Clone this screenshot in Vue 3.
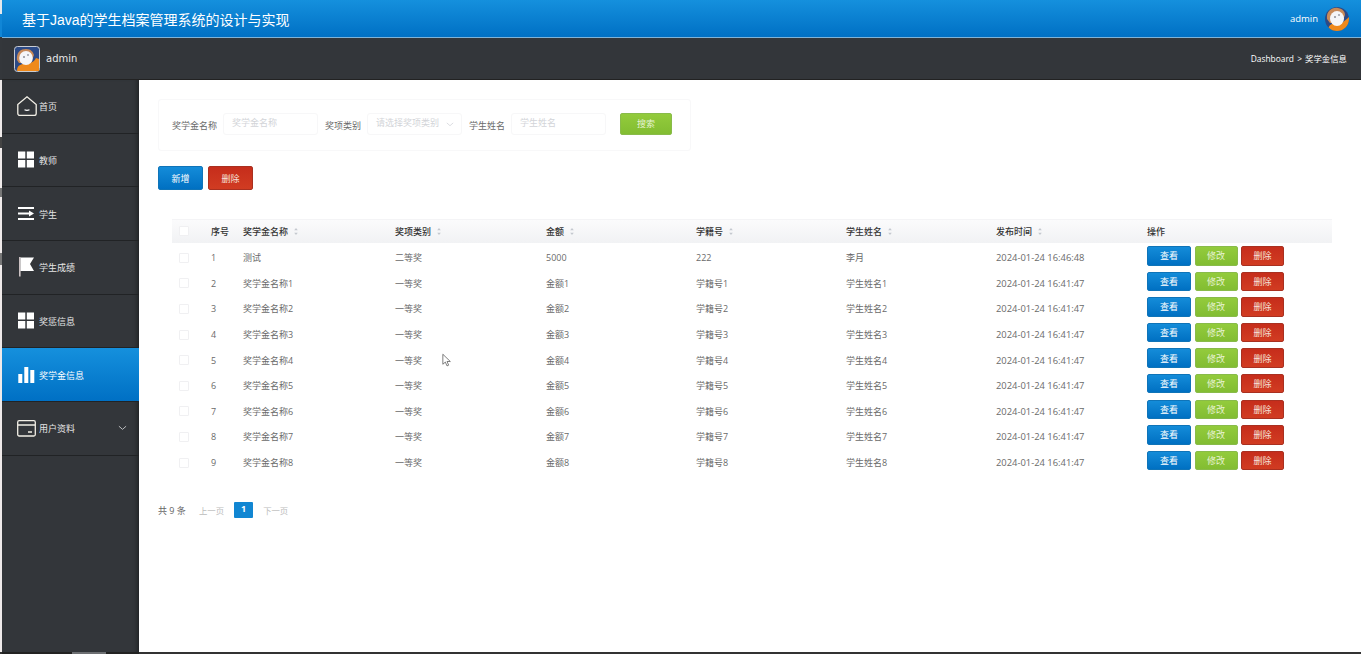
<template>
  <div class="page">
    <div class="strip"></div>
    <div class="shell">
      <header class="topbar">
        <div class="title">基于Java的学生档案管理系统的设计与实现</div>
        <div class="top-user">
          <span>admin</span>
          <svg class="avatar-round" viewBox="0 0 24 24">
            <defs><clipPath id="rc"><circle cx="12" cy="12" r="12" /></clipPath></defs>
            <g clip-path="url(#rc)">
              <rect width="24" height="24" fill="#2c4a86" />
              <path d="M2 12C1 4 7 0 13 1c5 1 7 4 7 7l-3 8H5z" fill="#c98a58" />
              <path d="M3 24c0-6 4-8 9-8 5 1 9-3 12-6v14z" fill="#ef8a1c" />
              <ellipse cx="12" cy="11.5" rx="7" ry="7.5" fill="#f5f6f8" />
              <circle cx="10" cy="10" r=".8" fill="#445" />
              <circle cx="14" cy="8" r=".7" fill="#445" />
            </g>
          </svg>
        </div>
      </header>
      <div class="subbar">
        <div class="sub-user">
          <svg class="avatar-square" viewBox="0 0 26 26">
            <rect x=".5" y=".5" width="25" height="25" rx="3" fill="#2c4a86" stroke="#c9ccd2" />
            <path d="M3 14C2 6 7 3 12 3c5 0 7 3 8 6l-3 8H5z" fill="#c98a58" />
            <path d="M3 25c0-5 3-7 7-7 6 0 10-2 12-6l3 1v12z" fill="#ef8a1c" />
            <ellipse cx="12" cy="12" rx="6.8" ry="7" fill="#f5f6f8" />
            <circle cx="10" cy="11" r=".8" fill="#445" />
            <circle cx="14" cy="9" r=".7" fill="#445" />
          </svg>
          <span>admin</span>
        </div>
        <div class="crumb">Dashboard &gt; 奖学金信息</div>
      </div>
      <div class="body">
        <aside class="sidebar">
          <div v-for="item in menu" :key="item.label" class="menu-item" :class="{ active: item.active }">
            <svg class="menu-icon" viewBox="0 0 20 20" v-html="item.icon"></svg>
            <span class="menu-label">{{ item.label }}</span>
            <svg v-if="item.arrow" class="menu-arrow" viewBox="0 0 10 6">
              <path d="M1 1l4 3.5L9 1" fill="none" stroke="#c8cacc" stroke-width="1" />
            </svg>
          </div>
        </aside>
        <main class="main">
          <div class="search-card">
            <label class="field-label">奖学金名称</label>
            <div class="input">奖学金名称</div>
            <label class="field-label">奖项类别</label>
            <div class="input select">
              请选择奖项类别
              <svg viewBox="0 0 10 6"><path d="M1 1l4 3.5L9 1" fill="none" stroke="#d4d6da" stroke-width="1" /></svg>
            </div>
            <label class="field-label">学生姓名</label>
            <div class="input">学生姓名</div>
            <button class="btn green search-btn">搜索</button>
          </div>
          <div class="actions">
            <button class="btn blue big">新增</button>
            <button class="btn red big">删除</button>
          </div>
          <div class="table-card">
            <div class="row head">
              <div><span class="check head-check"></span></div>
              <div>序号</div>
              <div v-for="h in sortable" :key="h">
                {{ h }}
                <svg class="sort" viewBox="0 0 6 10">
                  <path d="M3 1l2 2.6H1zM3 9L1 6.4h4z" fill="#c4c8cf" />
                </svg>
              </div>
              <div>操作</div>
            </div>
            <div v-for="r in rows" :key="r.id" class="row">
              <div><span class="check"></span></div>
              <div>{{ r.id }}</div>
              <div>{{ r.name }}</div>
              <div>{{ r.level }}</div>
              <div>{{ r.amount }}</div>
              <div>{{ r.no }}</div>
              <div>{{ r.student }}</div>
              <div class="time">{{ r.time }}</div>
              <div class="ops">
                <button class="btn blue small view">查看</button>
                <button class="btn green small">修改</button>
                <button class="btn red small">删除</button>
              </div>
            </div>
          </div>
          <div class="pager">
            <span class="total">共 9 条</span>
            <span class="page-link">上一页</span>
            <span class="page-cur">1</span>
            <span class="page-link">下一页</span>
          </div>
          <svg class="cursor" viewBox="0 0 12 17">
            <path d="M1 1v12l3-2.6 2 4.6 2-.9-2-4.400h4z" fill="#fff" stroke="#555" stroke-width=".9" />
          </svg>
        </main>
      </div>
    </div>
  </div>
</template>

<script setup>
const grid = '<path d="M1 1.500h7.300v7H1zM9.800 1.500H17v7H9.800zM1 10h7.300v7.500H1zM9.800 10H17v7.500H9.800z" fill="#fff"/>'

const menu = [
  {
    label: '首页',
    icon: '<path d="M.8 8.500L10 .8l9.200 7.700v9a2 2 0 0 1-2 2H2.800a2 2 0 0 1-2-2z" fill="none" stroke="#f2efe6" stroke-width="1.300"/><path d="M7.500 13.800q2.500 1 5 0" fill="none" stroke="#fff" stroke-width="1.200"/>'
  },
  { label: '教师', icon: grid },
  {
    label: '学生',
    icon: '<path d="M1 3h16v2H1zM1 8.500h11V6.500l5 3-5 3v-2H1zM1 14h16v2H1z" fill="#fff"/>'
  },
  {
    label: '学生成绩',
    icon: '<path d="M2.200 0h1.300v19.500H2.200z" fill="#f3e6e6"/><path d="M3.500 .5H17l-4 6.500 4 7H3.500z" fill="#fff"/>'
  },
  { label: '奖惩信息', icon: grid },
  {
    label: '奖学金信息',
    active: true,
    icon: '<path d="M1.300 9h4v9h-4zM7.300 2h4v16h-4zM13.300 5h4v13h-4z" fill="#fff"/>'
  },
  {
    label: '用户资料',
    arrow: true,
    icon: '<rect x=".7" y="2.700" width="17.600" height="15.300" rx="1.500" fill="none" stroke="#f2efe6" stroke-width="1.300"/><path d="M1 7h17M11 14h4" stroke="#f2efe6" stroke-width="1.300"/>'
  }
]

const sortable = ['奖学金名称', '奖项类别', '金额', '学籍号', '学生姓名', '发布时间']

const rows = [
  { id: 1, name: '测试', level: '二等奖', amount: '5000', no: '222', student: '李月', time: '2024-01-24 16:46:48' }
]
for (let i = 1; i <= 8; i++) {
  rows.push({
    id: i + 1,
    name: '奖学金名称' + i,
    level: '一等奖',
    amount: '金额' + i,
    no: '学籍号' + i,
    student: '学生姓名' + i,
    time: '2024-01-24 16:41:47'
  })
}
</script>

<style>
html, body { margin: 0; height: 100%; overflow: hidden; background: #fff; }
</style>

<style scoped>
.page {
  display: flex;
  height: 654px;
  font-family: "Open Sans", "Noto Sans CJK SC", sans-serif;
  font-size: 9px;
  color: #666;
}
/* sliver of the window behind the captured one */
.strip {
  width: 2px;
  flex: none;
  background: linear-gradient(#e4e8ec 0 14px, #1186d6 14px 37px, #34373b 37px 80px, #efeaea 80px 137px,
    #444 137px 148px, #efeaea 148px 188px, #777 188px 197px, #efeaea 197px 253px,
    #777 253px 265px, #efeaea 265px 652px, #333 652px);
}
.shell { flex: 1; display: flex; flex-direction: column; min-width: 0; }

.topbar {
  height: 37px;
  flex: none;
  display: flex;
  justify-content: space-between;
  align-items: center;
  padding: 0 12px 0 20px;
  background: linear-gradient(#1590dd, #0070c4);
  border-bottom: 1px solid #7fb3d8;
  color: #fff;
}
.title { font-family: "Liberation Sans", "Noto Sans CJK SC", sans-serif; font-size: 14px; }
.top-user { display: flex; align-items: center; gap: 7px; font-size: 9.500px; }
.avatar-round { width: 24px; height: 24px; }

.subbar {
  height: 42px;
  flex: none;
  box-sizing: border-box;
  display: flex;
  justify-content: space-between;
  align-items: center;
  padding: 0 14px 0 12px;
  background: #33363a;
  border-bottom: 1px solid #222;
  color: #fff;
}
.sub-user { display: flex; align-items: center; gap: 6px; font-family: "DejaVu Sans", sans-serif; font-size: 10px; color: #e8e8e8; }
.sub-user span { margin-top: -1px; }
.avatar-square { width: 26px; height: 26px; }
.crumb { font-size: 8.400px; word-spacing: 1px; margin-top: -2px; }

.body { flex: 1; display: flex; min-height: 0; }
.sidebar {
  width: 137px;
  flex: none;
  position: relative;
  background: #33363a;
  box-shadow: inset -5px 0 5px -4px #1b1d1f;
  border-bottom: 2px solid #222;
  box-sizing: border-box;
}
.sidebar::after {
  content: "";
  position: absolute;
  left: 70px;
  bottom: -2px;
  width: 34px;
  height: 2px;
  background: #6d6f72;
}
.menu-item {
  height: 53.700px;
  box-sizing: border-box;
  display: flex;
  align-items: center;
  padding: 0 12px 0 15px;
  border-bottom: 1px solid #212325;
  color: #e6e6e6;
}
.menu-item.active {
  background: linear-gradient(#1590dd, #0070c4);
  color: #fff;
}
.menu-icon { width: 20px; height: 20px; flex: none; margin-right: 2px; }
.menu-label { flex: 1; padding-top: 1px; }
.menu-arrow { width: 9px; height: 6px; }

.main {
  flex: 1;
  position: relative;
  box-sizing: border-box;
  background: #fff;
  border-bottom: 2px solid #333;
  padding: 19px 0 0 19px;
  min-width: 0;
}
.search-card {
  width: 533px;
  height: 52px;
  box-sizing: border-box;
  display: flex;
  align-items: center;
  padding: 0 0 3px 13px;
  border: 1px solid #f8f8f9;
  border-radius: 3px;
}
.field-label { color: #6a6a6a; margin-top: 3px; }
.input {
  box-sizing: border-box;
  width: 95px;
  height: 22px;
  line-height: 17px;
  border: 1px solid #f7f7f8;
  border-radius: 3px;
  color: #d2d4d8;
  padding-left: 8px;
  margin: 0 7px 0 6px;
}
.select {
  display: flex;
  justify-content: space-between;
  padding-right: 7px;
}
.select svg { width: 8px; height: 5px; margin-top: 8px; }
.btn {
  border: 1px solid transparent;
  padding: 0;
  font: inherit;
  color: #fff;
  border-radius: 2px;
}
.blue { background: linear-gradient(#148cd9, #0070c2); border-color: #0f74b8; }
.green { background: linear-gradient(#93cb3c, #82bd32); border-color: #89bb4a; color: #e8f3d4; }
.red { background: linear-gradient(#c62d1b, #d13c22); border-color: #a93020; color: #f6e2dc; }
.search-btn { width: 52px; height: 22px; margin-left: 7px; }
.actions { display: flex; gap: 5px; margin-top: 15px; }
.big { width: 45px; height: 24px; }

.table-card {
  margin: 29px 29px 0 14px;
  width: 1160px;
  border-top: 1px solid #f4f4f6;
  box-sizing: border-box;
}
.row {
  display: grid;
  grid-template-columns: 39px 32px 152px 151px 150px 150px 150px 151px 1fr;
  height: 25.600px;
  align-items: center;
  color: #6a6a6a;
}
.head {
  height: 23px;
  box-sizing: border-box;
  padding-bottom: 1px;
  background: linear-gradient(#fbfbfc, #f1f2f4);
  color: #333;
  font-weight: 500;
  margin-bottom: 2px;
}
.check {
  display: block;
  width: 8px;
  height: 8px;
  margin-left: 7px;
  border: 1px solid #f0f0f2;
  border-radius: 1px;
  background: #fff;
}
.time { font-size: 9.400px; }
.ops { display: flex; gap: 3.500px; align-self: start; margin-top: 1px; }
.small { height: 19.500px; width: 43px; }
.small.view { width: 44px; }
.sort { width: 6px; height: 9px; margin-left: 3px; vertical-align: -1px; }

.pager { display: flex; align-items: center; margin-top: 27px; }
.total { color: #666; width: 41px; }
.page-link { color: #bcbcbc; font-size: 8.400px; }
.page-cur {
  width: 19px;
  height: 16px;
  line-height: 14px;
  margin: 0 10px;
  text-align: center;
  background: #1186d2;
  border-radius: 1px;
  color: #fff;
  font-weight: 700;
}
.cursor { position: absolute; left: 303px; top: 273px; width: 10px; height: 15px; }
</style>
